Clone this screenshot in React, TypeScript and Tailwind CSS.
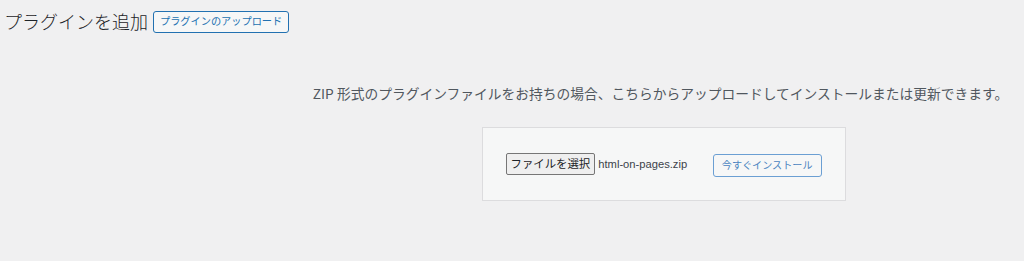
const jp = "font-['Noto_Sans_CJK_JP','Noto_Sans',sans-serif]"

export default function App() {
  return (
    <div className={`min-h-[261px] w-[1024px] bg-[#f0f0f1] ${jp} text-[#3c434a]`}>
      {/* page title */}
      <div className="flex items-center gap-[5px] pl-[4px] pt-[9px]">
        <h1 className="text-[18px] leading-[24px] font-light text-[#1d2327]">プラグインを追加</h1>
        <button className="h-[22px] px-[6px] rounded-[3px] border border-[#2271b1] bg-[#f6f7f7] text-[10.2px] leading-none text-[#2271b1] mt-[1px]">
          プラグインのアップロード
        </button>
      </div>

      {/* upload area */}
      <div className="pl-[297px] pt-[50px] text-center">
        <p className="text-[13.75px] leading-[20px] text-[#50575e]">
          ZIP 形式のプラグインファイルをお持ちの場合、こちらからアップロードしてインストールまたは更新できます。
        </p>
      </div>
      <div className="flex justify-center pl-[303px] pt-[24px]">
        <form
          className="flex h-[74px] w-[364px] items-center justify-between border border-[#dcdcde] bg-[#f6f7f7] pl-[23px] pr-[23px]"
          onSubmit={(e) => e.preventDefault()}
        >
          <div className="flex items-center gap-[3px]">
            <span className="flex h-[22px] items-center rounded-[2px] border border-[#767676] bg-[#efefef] px-[4px] text-[11.4px] leading-none text-[#1d2327]">
              ファイルを選択
            </span>
            <span className="text-[11.2px] text-[#3c434a] font-['Liberation_Sans','Noto_Sans',sans-serif]">
              html-on-pages.zip
            </span>
          </div>
          <button className="mt-[2px] h-[23px] rounded-[3px] border border-[#6b9fd3] bg-[#f6f7f7] px-[8px] text-[10.1px] leading-none text-[#4a84c0]">
            今すぐインストール
          </button>
        </form>
      </div>
    </div>
  )
}
